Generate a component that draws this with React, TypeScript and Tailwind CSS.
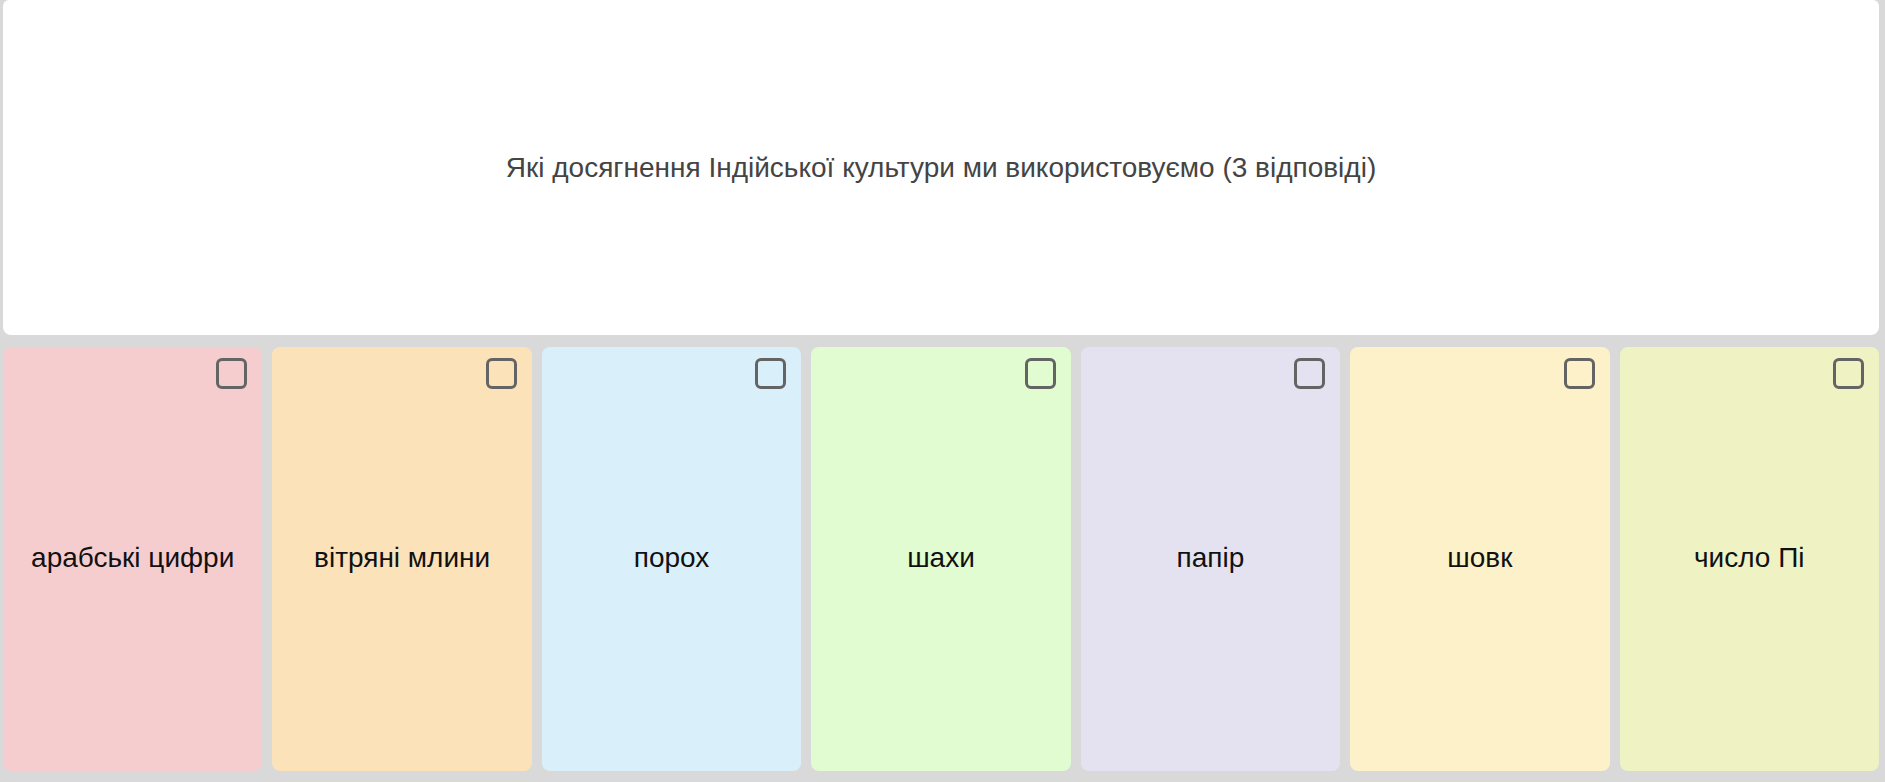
import React from 'react'

const cards = [
  { label: 'арабські цифри', bg: 'bg-[#f6cdcf]' },
  { label: 'вітряні млини', bg: 'bg-[#fbe2b9]' },
  { label: 'порох', bg: 'bg-[#d9f0fa]' },
  { label: 'шахи', bg: 'bg-[#e1fcd0]' },
  { label: 'папір', bg: 'bg-[#e4e2f1]' },
  { label: 'шовк', bg: 'bg-[#fdf1ca]' },
  { label: 'число Пі', bg: 'bg-[#eff3c4]' },
]

const App: React.FC = () => {
  return (
    <div className="w-[1885px] h-[782px] bg-[#d9d9d9] pl-[3px] pr-[6px] flex flex-col gap-[12px] font-['Liberation_Sans',Arial,sans-serif]">
      <div className="h-[335px] bg-white rounded-b-[8px] rounded-t-[6px] flex items-center justify-center">
        <p className="text-[28px] text-[#444444]">Які досягнення Індійської культури ми використовуємо (3 відповіді)</p>
      </div>
      <div className="h-[424px] flex gap-[10px]">
        {cards.map((c) => (
          <div key={c.label} className={`relative flex-1 rounded-[8px] ${c.bg} flex items-center justify-center pb-[3px]`}>
            <div className="absolute top-[11px] right-[15px] w-[31px] h-[31px] border-[3px] border-[#646464] rounded-[6px]" />
            <span className="text-[28px] text-[#111111]">{c.label}</span>
          </div>
        ))}
      </div>
    </div>
  )
}

export default App
